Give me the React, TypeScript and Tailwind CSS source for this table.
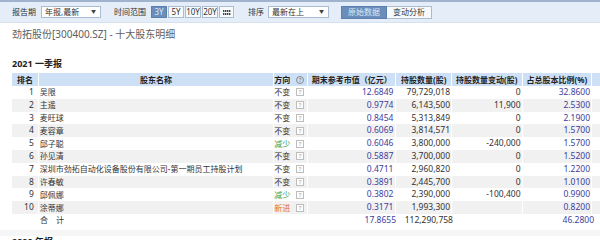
import React from "react";

type Row = {
  rank: string;
  name: string;
  dir?: "不变" | "减少" | "新进";
  value: string;
  shares: string;
  change: string;
  ratio: string;
};

const rows: Row[] = [
  { rank: "1", name: "吴限", dir: "不变", value: "12.6849", shares: "79,729,018", change: "0", ratio: "32.8600" },
  { rank: "2", name: "主遥", dir: "不变", value: "0.9774", shares: "6,143,500", change: "11,900", ratio: "2.5300" },
  { rank: "3", name: "麦旺球", dir: "不变", value: "0.8454", shares: "5,313,849", change: "0", ratio: "2.1900" },
  { rank: "4", name: "麦容章", dir: "不变", value: "0.6069", shares: "3,814,571", change: "0", ratio: "1.5700" },
  { rank: "5", name: "邱子聪", dir: "减少", value: "0.6046", shares: "3,800,000", change: "-240,000", ratio: "1.5700" },
  { rank: "6", name: "孙见清", dir: "不变", value: "0.5887", shares: "3,700,000", change: "0", ratio: "1.5200" },
  { rank: "7", name: "深圳市劲拓自动化设备股份有限公司-第一期员工持股计划", dir: "不变", value: "0.4711", shares: "2,960,820", change: "0", ratio: "1.2200" },
  { rank: "8", name: "许春敏", dir: "不变", value: "0.3891", shares: "2,445,700", change: "0", ratio: "1.0100" },
  { rank: "9", name: "邱佩娜", dir: "减少", value: "0.3802", shares: "2,390,000", change: "-100,400", ratio: "0.9900" },
  { rank: "10", name: "涂蒂娜", dir: "新进", value: "0.3171", shares: "1,993,300", change: "", ratio: "0.8200" },
];

function dirColor(dir?: string) {
  if (dir === "减少") return "text-[#3f9c3f]";
  if (dir === "新进") return "text-[#e8702a]";
  return "text-[#333]";
}

function HelpBox() {
  return (
    <span className="flex h-[8px] w-[8px] items-center justify-center border border-[#bdbdbd] bg-white text-[6px] leading-none text-[#999]">
      ?
    </span>
  );
}

function Select({ label, width }: { label: string; width: string }) {
  return (
    <div
      className={`flex h-[12px] items-center justify-between border border-[#a9bcd2] bg-white pl-[3px] pr-[4px] text-[8px] text-[#333] ${width}`}
    >
      <span>{label}</span>
      <span className="text-[5px] text-[#444]">▼</span>
    </div>
  );
}

export default function App() {
  return (
    <div className="h-[240px] w-[600px] overflow-hidden bg-white font-['Noto_Sans','Noto_Sans_CJK_SC',sans-serif] text-[#333]">
      <div className="h-[2px] bg-[#9fb3cc]" />

      {/* toolbar */}
      <div className="flex h-[21px] items-center border-b border-[#d5e1ee] bg-[#e5eef8] pl-[12px] text-[8px]">
        <span>报告期</span>
        <div className="ml-[5px]">
          <Select label="年报,最新" width="w-[60px]" />
        </div>
        <span className="ml-[13px]">时间范围</span>
        <div className="ml-[5px] flex h-[12px]">
          <span className="flex w-[16px] items-center justify-center border border-[#5b7fae] bg-[#6a8dba] text-[#dce8f5]">3Y</span>
          <span className="ml-px flex w-[16px] items-center justify-center border border-[#a9bcd2] bg-[#f7fafd]">5Y</span>
          <span className="ml-px flex w-[16px] items-center justify-center border border-[#a9bcd2] bg-[#f7fafd]">10Y</span>
          <span className="ml-px flex w-[16px] items-center justify-center border border-[#a9bcd2] bg-[#f7fafd]">20Y</span>
          <span className="ml-px flex w-[15px] items-center justify-center border border-[#a9bcd2] bg-[#f7fafd]">
            <svg width="8" height="5" viewBox="0 0 8 5">
              {[0, 2, 4, 6].map((x) =>
                [0, 3].map((y) => <rect key={`${x}-${y}`} x={x} y={y} width="1.4" height="2" fill="#444" />)
              )}
            </svg>
          </span>
        </div>
        <span className="ml-[14px]">排序</span>
        <div className="ml-[4px]">
          <Select label="最新在上" width="w-[61px]" />
        </div>
        <div className="ml-[12px] flex h-[13px]">
          <span className="flex w-[46px] items-center justify-center border border-[#5b7fae] bg-[#6a8dba] text-[#dce8f5]">原始数据</span>
          <span className="flex w-[45px] items-center justify-center border border-l-0 border-[#a9bcd2] bg-[#f7fafd]">变动分析</span>
        </div>
      </div>

      <div className="pl-[12px]">
        <h1 className="mt-[4px] text-[10px] leading-[14px] text-[#5e5e5e]">劲拓股份[300400.SZ] - 十大股东明细</h1>
        <h2 className="mt-[17px] text-[9px] font-bold leading-[12px] text-[#222]">2021 一季报</h2>

        <div className="mt-[3px] flex flex-col">
          {/* header */}
          <div className="flex h-[13px] gap-px text-[8px] font-bold text-[#222]">
            <div className="flex w-[26px] items-center justify-center bg-[#cde0f5]">排名</div>
            <div className="flex w-[236px] items-center justify-center bg-[#cde0f5]">股东名称</div>
            <div className="flex w-[33px] items-center justify-between bg-[#cde0f5] pr-[3px]">
              <span>方向</span>
              <span className="flex h-[8px] w-[8px] items-center justify-center rounded-full border border-[#888] text-[6px] font-normal leading-none text-[#666]">
                ?
              </span>
            </div>
            <div className="flex w-[88px] items-center justify-center bg-[#cde0f5]">期末参考市值（亿元）</div>
            <div className="flex w-[55px] items-center justify-center bg-[#cde0f5]">持股数量(股)</div>
            <div className="flex w-[70px] items-center justify-center bg-[#cde0f5]">持股数量变动(股)</div>
            <div className="flex w-[69px] items-center justify-center bg-[#cde0f5]">占总股本比例(%)</div>
            <div className="w-[8px] bg-[#cde0f5]" />
          </div>

          {rows.map((r, i) => {
            const bg = i % 2 === 1 ? "bg-[#f1f1f1]" : "bg-white";
            return (
              <div key={r.rank} className="flex h-[12.8px] gap-px text-[8px]">
                <div className={`flex w-[26px] items-center justify-end pr-[4px] text-[8.5px] ${bg}`}>{r.rank}</div>
                <div className={`flex w-[236px] items-center pl-[1px] ${bg}`}>{r.name}</div>
                <div className={`flex w-[33px] items-center justify-between pr-[3px] ${bg}`}>
                  <span className={dirColor(r.dir)}>{r.dir}</span>
                  <HelpBox />
                </div>
                <div className={`flex w-[88px] items-center justify-end pr-[2px] text-[8.5px] text-[#3d3d9e] ${bg}`}>{r.value}</div>
                <div className={`flex w-[55px] items-center justify-end pr-[1px] text-[8.5px] ${bg}`}>{r.shares}</div>
                <div className={`flex w-[70px] items-center justify-end pr-[1px] text-[8.5px] ${bg}`}>{r.change}</div>
                <div className={`flex w-[69px] items-center justify-end pr-[1px] text-[8.5px] text-[#3d3d9e] ${bg}`}>{r.ratio}</div>
                <div className={`w-[8px] ${bg}`} />
              </div>
            );
          })}

          <div className="flex h-[12.8px] gap-px text-[8px]">
            <div className="w-[26px]" />
            <div className="flex w-[236px] items-center pl-[1px]">合　计</div>
            <div className="w-[33px]" />
            <div className="flex w-[88px] items-center justify-end pr-[2px] text-[8.5px] text-[#3d3d9e]">17.8655</div>
            <div className="flex w-[55px] items-center justify-end pr-[1px] text-[8.5px]">112,290,758</div>
            <div className="w-[70px]" />
            <div className="flex w-[69px] items-center justify-end pr-[1px] text-[8.5px] text-[#3d3d9e]">46.2800</div>
          </div>
        </div>
      </div>

      <div className="mt-[3px] h-[6px] bg-[#f6f6f6]" />
      <div className="pl-[12px] text-[9px] font-bold leading-[12px] text-[#222]">2020 年报</div>
    </div>
  );
}
